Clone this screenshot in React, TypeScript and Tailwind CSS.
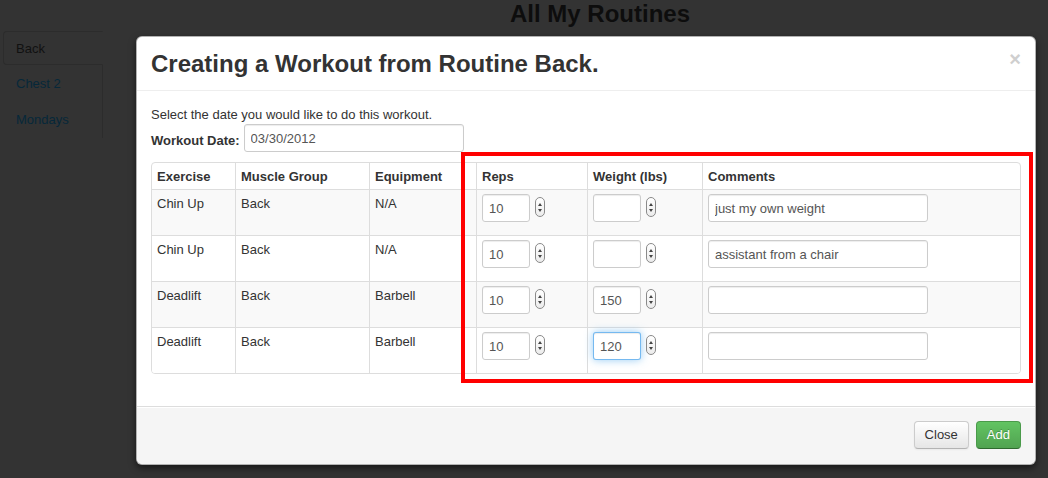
import React from 'react';

type Row = {
  exercise: string;
  group: string;
  equipment: string;
  reps: string;
  weight: string;
  comment: string;
  focused?: boolean;
};

const rows: Row[] = [
  { exercise: 'Chin Up', group: 'Back', equipment: 'N/A', reps: '10', weight: '', comment: 'just my own weight' },
  { exercise: 'Chin Up', group: 'Back', equipment: 'N/A', reps: '10', weight: '', comment: 'assistant from a chair' },
  { exercise: 'Deadlift', group: 'Back', equipment: 'Barbell', reps: '10', weight: '150', comment: '' },
  { exercise: 'Deadlift', group: 'Back', equipment: 'Barbell', reps: '10', weight: '120', comment: '', focused: true },
];

const Stepper: React.FC = () => (
  <span className="inline-flex flex-col items-center justify-center gap-[3px] w-[10px] h-[20px] ml-[5px] mb-[11px] rounded-full border border-[#8a8a8a] bg-gradient-to-b from-white to-[#ececec] align-middle">
    <span className="w-0 h-0 border-l-[2px] border-r-[2px] border-b-[3px] border-l-transparent border-r-transparent border-b-[#444]" />
    <span className="w-0 h-0 border-l-[2px] border-r-[2px] border-t-[3px] border-l-transparent border-r-transparent border-t-[#444]" />
  </span>
);

const TextBox: React.FC<{ value: string; width: string; focused?: boolean }> = ({ value, width, focused }) => (
  <input
    readOnly
    value={value}
    className={`${width} h-[28px] mb-[9px] px-[6px] rounded-[3px] border bg-white text-[13px] text-[#555] align-middle outline-none ${
      focused
        ? 'border-[rgba(82,168,236,0.8)] shadow-[inset_0_1px_1px_rgba(0,0,0,0.075),0_0_8px_rgba(82,168,236,0.6)]'
        : 'border-[#ccc] shadow-[inset_0_1px_1px_rgba(0,0,0,0.075)]'
    }`}
  />
);

const App: React.FC = () => {
  return (
    <div className="relative w-[1048px] h-[478px] overflow-hidden bg-[#333333] font-['Liberation_Sans',Arial,sans-serif] text-[13px] leading-[18px]">
      {/* page under the backdrop */}
      <div className="h-[28px] pl-[152px] text-center text-[24px] leading-[28px] font-bold text-[#0d0d0d]">All My Routines</div>
      <ul className="mt-[3px] ml-[3px] w-[100px] border-r border-[#2c2c2c]">
        <li className="-mr-px h-[34px] px-[12px] pt-[1px] flex items-center rounded-l-[4px] border border-[#2c2c2c] border-r-[#333333] text-[#111]">
          Back
        </li>
        <li className="h-[36px] px-[13px] pt-[2px] flex items-center text-[#06283a]">Chest 2</li>
        <li className="h-[37px] px-[13px] pt-[1px] flex items-center text-[#06283a]">Mondays</li>
      </ul>

      {/* modal */}
      <div className="absolute left-[136px] top-[36px] w-[900px] h-[429px] flex flex-col bg-white rounded-[6px] border border-[rgba(0,0,0,0.3)] shadow-[0_3px_7px_rgba(0,0,0,0.55)] text-[#333]">
        <div className="h-[54px] shrink-0 flex items-center justify-between px-[14px] border-b border-[#eee]">
          <h3 className="text-[24px] leading-[28px] font-bold text-[#333] mt-[1px]">Creating a Workout from Routine Back.</h3>
          <span className="self-start mt-[13px] text-[20px] leading-[18px] font-bold text-[#cfcfcf]">×</span>
        </div>

        <div className="flex-1 px-[14px] pt-[15px]">
          <p>Select the date you would like to do this workout.</p>
          <div className="flex items-center gap-[4px]">
            <label className="font-bold mb-[4px]">Workout Date:</label>
            <TextBox value="03/30/2012" width="w-[220px]" />
          </div>

          <div className="mt-[1px] border border-[#ddd] rounded-[4px] overflow-hidden">
            <table className="w-full table-fixed border-separate border-spacing-0 text-left">
              <thead>
                <tr>
                  <th className="w-[83px] px-[5px] pt-[5px] pb-[3px] font-bold">Exercise</th>
                  <th className="w-[134px] px-[5px] pt-[5px] pb-[3px] font-bold border-l border-[#ddd]">Muscle Group</th>
                  <th className="w-[107px] px-[5px] pt-[5px] pb-[3px] font-bold border-l border-[#ddd]">Equipment</th>
                  <th className="w-[111px] px-[5px] pt-[5px] pb-[3px] font-bold border-l border-[#ddd]">Reps</th>
                  <th className="w-[115px] px-[5px] pt-[5px] pb-[3px] font-bold border-l border-[#ddd]">Weight (lbs)</th>
                  <th className="px-[5px] pt-[5px] pb-[3px] font-bold border-l border-[#ddd]">Comments</th>
                </tr>
              </thead>
              <tbody>
                {rows.map((r, i) => (
                  <tr key={i} className={i % 2 === 0 ? 'bg-[#f9f9f9]' : 'bg-white'}>
                    <td className="align-top px-[5px] pt-[5px] pb-[3px] border-t border-[#ddd]">{r.exercise}</td>
                    <td className="align-top px-[5px] pt-[5px] pb-[3px] border-t border-l border-[#ddd]">{r.group}</td>
                    <td className="align-top px-[5px] pt-[5px] pb-[3px] border-t border-l border-[#ddd]">{r.equipment}</td>
                    <td className="align-top px-[5px] py-[4px] border-t border-l border-[#ddd] whitespace-nowrap">
                      <TextBox value={r.reps} width="w-[48px]" />
                      <Stepper />
                    </td>
                    <td className="align-top px-[5px] py-[4px] border-t border-l border-[#ddd] whitespace-nowrap">
                      <TextBox value={r.weight} width="w-[48px]" focused={r.focused} />
                      <Stepper />
                    </td>
                    <td className="align-top px-[5px] py-[4px] border-t border-l border-[#ddd]">
                      <TextBox value={r.comment} width="w-[220px]" />
                    </td>
                  </tr>
                ))}
              </tbody>
            </table>
          </div>
        </div>

        <div className="h-[58px] shrink-0 flex items-start justify-end gap-[7px] px-[14px] pt-[14px] bg-[#f5f5f5] border-t border-[#ddd] rounded-b-[6px] shadow-[inset_0_1px_0_#fff]">
          <button className="h-[28px] px-[10px] rounded-[4px] border border-[#ccc] border-b-[#b3b3b3] bg-gradient-to-b from-white to-[#e6e6e6] text-[#333] shadow-[inset_0_1px_0_rgba(255,255,255,0.2),0_1px_2px_rgba(0,0,0,0.05)]">
            Close
          </button>
          <button className="h-[28px] px-[10px] rounded-[4px] border border-[#4a9a4a] border-b-[#2f6a2f] bg-gradient-to-b from-[#62c462] to-[#51a351] text-white [text-shadow:0_-1px_0_rgba(0,0,0,0.25)]">
            Add
          </button>
        </div>
      </div>

      {/* annotation */}
      <div className="absolute left-[461px] top-[152px] w-[572px] h-[231px] border-[4px] border-[#ff0000]" />
    </div>
  );
};

export default App;
